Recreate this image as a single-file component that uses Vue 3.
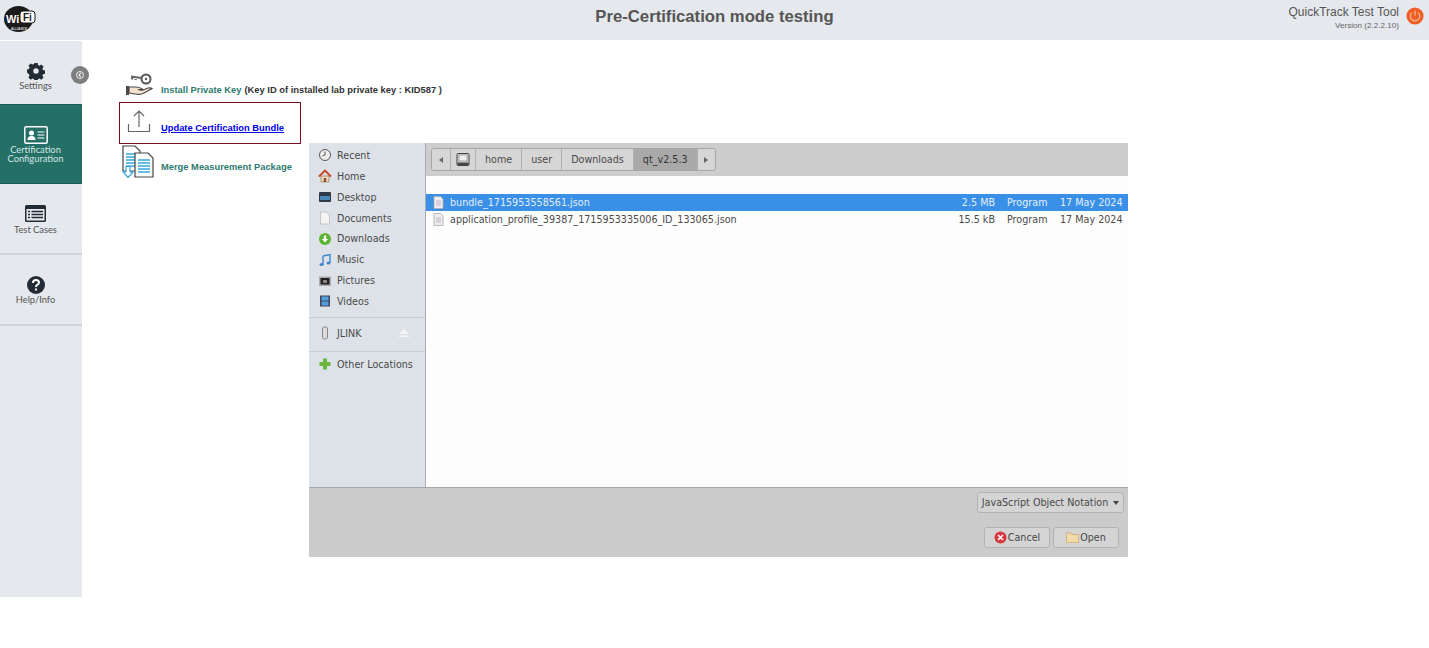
<script setup>
const places = [
  { name: 'Recent', icon: 'recent' },
  { name: 'Home', icon: 'home' },
  { name: 'Desktop', icon: 'desktop' },
  { name: 'Documents', icon: 'documents' },
  { name: 'Downloads', icon: 'downloads' },
  { name: 'Music', icon: 'music' },
  { name: 'Pictures', icon: 'pictures' },
  { name: 'Videos', icon: 'videos' },
]
const crumbs = ['home', 'user', 'Downloads']
const files = [
  { name: 'bundle_1715953558561.json', size: '2.5 MB', selected: true },
  { name: 'application_profile_39387_1715953335006_ID_133065.json', size: '15.5 kB', selected: false },
]
</script>

<template>
  <div class="page">
    <header class="topbar">
      <div class="logo">
        <svg width="36" height="34" viewBox="0 0 36 34">
          <ellipse cx="16.500" cy="16" rx="14.500" ry="13" fill="#1b1b1b" />
          <rect x="18" y="8" width="15" height="12" rx="3" fill="#fff" stroke="#1b1b1b" />
          <text x="4" y="20" class="logo-wi">Wi</text>
          <text x="21" y="18" class="logo-fi">Fi</text>
          <text x="9" y="26.500" class="logo-alliance">ALLIANCE</text>
        </svg>
      </div>
      <h1 class="title">Pre-Certification mode testing</h1>
      <div class="tool">
        <div class="tool-text">
          <div class="tool-name">QuickTrack Test Tool</div>
          <div class="tool-version">Version (2.2.2.10)</div>
        </div>
        <svg class="power" width="18" height="18" viewBox="0 0 20 20">
          <circle cx="10" cy="10" r="9.500" fill="#ee5f27" />
          <path d="M6.400 6.200 a5.300 5.300 0 1 0 7.200 0" fill="none" stroke="#f6c0a0" stroke-width="1.200" />
          <path d="M10 3.800 v6" stroke="#f6c0a0" stroke-width="1.200" />
        </svg>
      </div>
    </header>

    <div class="body">
      <nav class="sidebar">
        <a class="nav-item settings">
          <svg width="18" height="18" viewBox="0 0 20 20">
            <path fill="#232b35" fill-rule="evenodd" d="M8.2 1h3.600l.5 2.400 1.500.7 2.100-1.300 2.500 2.500-1.300 2.100.7 1.500 2.200.5v3.600l-2.200.5-.7 1.500 1.300 2.100-2.500 2.500-2.100-1.300-1.500.7-.5 2.200H8.200l-.5-2.200-1.500-.7-2.100 1.300-2.500-2.500 1.300-2.100-.7-1.500L0 11.800V8.200l2.200-.5.7-1.500L1.600 4.100l2.500-2.500 2.100 1.300 1.500-.7zM10 7a3 3 0 1 0 0 6 3 3 0 0 0 0-6z" />
          </svg>
          <span>Settings</span>
        </a>
        <a class="nav-item active cert">
          <svg width="24" height="18" viewBox="0 0 24 18">
            <rect x="0.800" y="0.800" width="22.400" height="16.400" rx="1.500" fill="none" stroke="#fff" stroke-width="1.500" />
            <circle cx="7.500" cy="7" r="2.500" fill="#fff" />
            <path d="M3.500 14 q0 -4 4 -4 q4 0 4 4 z" fill="#fff" />
            <path d="M13.500 6 h7 M13.500 9 h7 M13.500 12 h7" stroke="#fff" stroke-width="1.200" />
          </svg>
          <span>Certification<br />Configuration</span>
        </a>
        <a class="nav-item cases">
          <svg width="21" height="17" viewBox="0 0 21 17">
            <rect width="21" height="17" rx="1.500" fill="#232b35" />
            <rect x="1.500" y="4" width="18" height="11.500" fill="#e4e7ec" />
            <path d="M3 6.500h2M6.500 6.500h11.500M3 9.500h2M6.500 9.500h11.500M3 12.500h2M6.500 12.500h11.500" stroke="#232b35" stroke-width="1.300" />
          </svg>
          <span>Test Cases</span>
        </a>
        <a class="nav-item help">
          <svg width="18" height="18" viewBox="0 0 18 18">
            <circle cx="9" cy="9" r="9" fill="#232b35" />
            <path d="M6 7 q0 -3 3 -3 q3 0 3 2.500 q0 1.500 -1.500 2.200 q-1.500 .8 -1.500 2.300" fill="none" stroke="#fff" stroke-width="2" />
            <rect x="8" y="12.500" width="2" height="2" fill="#fff" />
          </svg>
          <span>Help/Info</span>
        </a>
        <button class="collapse">
          <svg width="8" height="8" viewBox="0 0 8 8">
            <circle cx="4" cy="4" r="3.500" fill="none" stroke="#eee" stroke-width="1" />
            <path d="M4.800 2 L3 4 L4.800 6" fill="none" stroke="#eee" stroke-width="1.200" />
          </svg>
        </button>
      </nav>

      <main class="content">
        <div class="actions">
          <a class="action install">
            <svg class="action-icon" width="27" height="23" viewBox="0 0 27 23">
              <circle cx="20" cy="6" r="4.500" fill="none" stroke="#555" stroke-width="2" />
              <circle cx="20" cy="6" r="1.200" fill="#555" />
              <path d="M15.500 5 L5 3.500 M6.500 3.500 l-.5 3 M10 4 l-.5 3" fill="none" stroke="#666" stroke-width="2.200" />
              <path d="M3 14 h7 q4 0 7 2.500 h-5 q3 1 5 .5 l5 -2 q3 -.5 4 .5 l-9 5 q-4 1.500 -8 .5 l-6 -1 z" fill="#f7e2d0" stroke="#4a4a4a" stroke-width="1.200" />
              <rect x="0" y="13" width="3" height="9" fill="#4a4a4a" />
            </svg>
            <span class="action-label">Install Private Key</span>
            <span class="key-note">(Key ID of installed lab private key : KID587 )</span>
          </a>
          <a class="action update">
            <svg class="action-icon" width="24" height="24" viewBox="0 0 24 24">
              <path d="M12 18 V2 M7 7 l5 -5 l5 5" fill="none" stroke="#666" stroke-width="1.200" />
              <path d="M1.500 15 v7.500 h21 V15" fill="none" stroke="#666" stroke-width="1.200" />
            </svg>
            <span class="update-label">Update Certification Bundle</span>
          </a>
          <a class="action merge">
            <svg class="action-icon" width="32" height="33" viewBox="0 0 32 33">
              <path d="M1 1 h12 l5 5 v20 H1 z" fill="#fff" stroke="#444" stroke-width="1.200" />
              <path d="M4 9 h11 M4 12 h11 M4 15 h11 M4 18 h11 M4 21 h11" stroke="#35a9dd" stroke-width="1.500" />
              <path d="M13 8 h13 l5 5 v19 H13 z" fill="#fff" stroke="#444" stroke-width="1.200" />
              <path d="M16 15 h12 M16 18 h12 M16 21 h12 M16 24 h12 M16 27 h12" stroke="#35a9dd" stroke-width="1.500" />
              <path d="M4 21.500 h4 v5.500 h3 l-5 5.500 l-5 -5.500 h3 z" fill="#fff" stroke="#35a9dd" stroke-width="1.200" />
            </svg>
            <span class="action-label">Merge Measurement Package</span>
          </a>
        </div>

        <section class="dialog">
          <div class="dialog-main">
            <aside class="places">
              <div v-for="p in places" :key="p.name" class="place">
                <svg class="place-icon" width="14" height="14" viewBox="0 0 14 14">
                  <template v-if="p.icon === 'recent'">
                    <circle cx="7" cy="7" r="5.500" fill="#eee" stroke="#555" />
                    <path d="M7 3.500 V7 L4.500 8" fill="none" stroke="#555" />
                  </template>
                  <template v-else-if="p.icon === 'home'">
                    <path d="M3 7 h8 v6 H3 z" fill="#f0d8bc" stroke="#8a6a4a" stroke-width=".6" />
                    <path d="M1 7.500 L7 1.500 L13 7.500" fill="none" stroke="#c4441c" stroke-width="1.800" />
                    <rect x="5.800" y="9" width="2.400" height="4" fill="#7a5230" />
                  </template>
                  <template v-else-if="p.icon === 'desktop'">
                    <rect x="1" y="2" width="12" height="10" rx="1" fill="#2f3b49" />
                    <rect x="2" y="6" width="10" height="4" fill="#4a86b8" />
                  </template>
                  <template v-else-if="p.icon === 'documents'">
                    <path d="M2.500 1 h6 l3 3 v9 h-9 z" fill="#f4f4f4" stroke="#bbb" stroke-width=".8" />
                  </template>
                  <template v-else-if="p.icon === 'downloads'">
                    <circle cx="7" cy="7" r="6" fill="#5cb531" />
                    <path d="M5.800 3.500 h2.400 v3.500 h2 L7 10.500 L3.800 7 h2 z" fill="#fff" />
                  </template>
                  <template v-else-if="p.icon === 'music'">
                    <path d="M5 3 L12 1.500 V10 M5 3 v9" fill="none" stroke="#3f86cf" stroke-width="1.400" />
                    <ellipse cx="3.500" cy="11.500" rx="2" ry="1.500" fill="#3f86cf" />
                    <ellipse cx="10.500" cy="10" rx="2" ry="1.500" fill="#3f86cf" />
                  </template>
                  <template v-else-if="p.icon === 'pictures'">
                    <rect x="1" y="2.500" width="12" height="9.500" fill="#aaa" />
                    <rect x="2.500" y="4" width="9" height="6.500" fill="#222" />
                    <rect x="5" y="6" width="4" height="3" fill="#888" />
                  </template>
                  <template v-else>
                    <rect x="2" y="1.500" width="10" height="11" fill="#445" />
                    <rect x="3.500" y="2.500" width="7" height="4" fill="#4fa0e0" />
                    <rect x="3.500" y="7.500" width="7" height="4" fill="#4fa0e0" />
                  </template>
                </svg>
                <span>{{ p.name }}</span>
              </div>
              <div class="place-sep"></div>
              <div class="place jlink">
                <svg class="place-icon" width="14" height="14" viewBox="0 0 14 14">
                  <rect x="4.500" y="1" width="5" height="12" rx="2" fill="#dcdcdc" stroke="#888" />
                </svg>
                <span>JLINK</span>
                <svg class="eject" width="10" height="9" viewBox="0 0 10 9">
                  <path d="M5 0 L10 5 H0 z M0 6.500 h10 V8 H0 z" fill="#f6f6f6" />
                </svg>
              </div>
              <div class="place-sep second"></div>
              <div class="place">
                <svg class="place-icon" width="14" height="14" viewBox="0 0 14 14">
                  <path d="M5 1.500 h4 v3.500 h3.500 v4 H9 v3.500 H5 V9 H1.500 V5 H5 z" fill="#6cb33f" />
                </svg>
                <span>Other Locations</span>
              </div>
            </aside>

            <div class="browser">
              <div class="pathbar">
                <div class="crumbs">
                  <button class="crumb arrow"><i class="tri left"></i></button>
                  <button class="crumb disk">
                    <svg width="14" height="13" viewBox="0 0 14 13">
                      <rect x="1" y="0.500" width="12" height="12" rx="1" fill="#d6d6d6" stroke="#444" />
                      <rect x="3" y="2" width="8" height="6" fill="#eee" stroke="#777" stroke-width=".6" />
                      <rect x="1.500" y="9.500" width="11" height="2.500" fill="#444" />
                    </svg>
                  </button>
                  <button v-for="c in crumbs" :key="c" class="crumb">{{ c }}</button>
                  <button class="crumb current">qt_v2.5.3</button>
                  <button class="crumb arrow"><i class="tri right"></i></button>
                </div>
              </div>
              <div class="files">
                <div v-for="f in files" :key="f.name" class="file" :class="{ selected: f.selected }">
                  <svg class="file-icon" width="11" height="13" viewBox="0 0 11 13">
                    <path d="M1 .5 h6.500 l2.500 2.500 v9.500 H1 z" fill="#eee" stroke="#aaa" stroke-width=".8" />
                    <path d="M3 5 h5 M3 7 h5 M3 9 h5" stroke="#b9a3c0" stroke-width=".8" />
                  </svg>
                  <span class="file-name">{{ f.name }}</span>
                  <span class="file-size">{{ f.size }}</span>
                  <span class="file-type">Program</span>
                  <span class="file-date">17 May 2024</span>
                </div>
              </div>
            </div>
          </div>

          <footer class="dialog-foot">
            <button class="btn combo">JavaScript Object Notation <i class="tri down"></i></button>
            <div class="foot-buttons">
              <button class="btn cancel">
                <svg width="13" height="13" viewBox="0 0 13 13">
                  <circle cx="6.500" cy="6.500" r="6" fill="#d9363e" />
                  <path d="M4 4 L9 9 M9 4 L4 9" stroke="#fff" stroke-width="1.600" />
                </svg>
                Cancel
              </button>
              <button class="btn open">
                <svg width="13" height="11" viewBox="0 0 13 11">
                  <path d="M.5 1 h4.500 l1 1.500 h6.500 v8 H.5 z" fill="#f2d9a8" stroke="#c9a66a" stroke-width=".7" />
                </svg>
                Open
              </button>
            </div>
          </footer>
        </section>
      </main>
    </div>
  </div>
</template>

<style scoped>
.page {
  width: 1429px;
  height: 648px;
  background: #fff;
  overflow: hidden;
  font-family: "Liberation Sans", Arial, sans-serif;
}

.topbar {
  height: 40px;
  background: #e5e8ec;
  display: grid;
  grid-template-columns: 1fr auto 1fr;
  align-items: start;
}
.logo {
  padding: 3px 0 0 2px;
}
.logo-wi {
  font: 900 11px "Liberation Sans", sans-serif;
  fill: #fff;
}
.logo-fi {
  font: 700 10px "Liberation Sans", sans-serif;
  fill: #1b1b1b;
}
.logo-alliance {
  font: 700 3.200px "Liberation Sans", sans-serif;
  fill: #ddd;
}
.title {
  margin: 0;
  padding-top: 7px;
  font-size: 16.700px;
  line-height: 20px;
  font-weight: 700;
  color: #555;
}
.tool {
  display: flex;
  justify-content: flex-end;
  align-items: flex-start;
  gap: 7px;
  padding: 5px 5px 0 0;
}
.power {
  margin-top: 2px;
}
.tool-text {
  text-align: right;
}
.tool-name {
  font-size: 12px;
  line-height: 15px;
  color: #555;
}
.tool-version {
  font-size: 8.100px;
  line-height: 11px;
  color: #666;
}

.body {
  display: flex;
  align-items: flex-start;
}

.sidebar {
  width: 82px;
  height: 557px;
  background: #e5e8ec;
  border-top: 1px solid #fff;
  box-sizing: border-box;
  position: relative;
  font-family: Lato, sans-serif;
}
.nav-item {
  display: flex;
  flex-direction: column;
  align-items: center;
  color: #555;
  font-size: 9.300px;
  box-sizing: border-box;
  border-bottom: 2px solid #cfd2d6;
  line-height: 9px;
  padding-right: 11px;
}
.settings {
  height: 63px;
  padding-top: 21px;
  gap: 1px;
  border-bottom: 0;
}
.cert {
  height: 80px;
  padding-top: 21px;
  gap: 1px;
}
.cases {
  height: 71px;
  padding-top: 21px;
  gap: 3px;
}
.help {
  height: 71px;
  padding-top: 21px;
  gap: 1px;
}
.active {
  background: #246f66;
  border-top: 1px solid #1d5c55;
  border-bottom: 1px solid #1d5c55;
  color: #d6e6e3;
  text-align: center;
}
.collapse {
  position: absolute;
  top: 25px;
  left: 71px;
  width: 18px;
  height: 18px;
  padding: 0;
  border: 0;
  border-radius: 50%;
  background: #7e7e7e;
  display: flex;
  align-items: center;
  justify-content: center;
}

.content {
  flex: 1;
  display: flex;
  padding: 30px 0 0 37px;
  align-items: flex-start;
}

.actions {
  width: 190px;
  flex: none;
  font-size: 9.350px;
  line-height: 11px;
  font-weight: 700;
}
.action {
  display: flex;
  align-items: flex-end;
  white-space: nowrap;
  box-sizing: border-box;
}
.action-icon {
  flex: none;
}
.action-label {
  color: #2f7a6f;
}
.install {
  height: 31px;
  padding: 0 0 5px 7px;
}
.install .action-icon {
  margin-right: 8px;
}
.key-note {
  color: #333;
  margin-left: 3px;
}
.update {
  width: 182px;
  height: 42px;
  margin-top: 1px;
  border: 1px solid #7a0f22;
  padding: 0 0 10px 7px;
}
.update .action-icon {
  margin-right: 10px;
}
.update-label {
  color: #0000ee;
  text-decoration: underline;
  margin-bottom: -1px;
}
.merge {
  height: 33px;
  margin-top: 1px;
  padding-left: 3px;
}
.merge .action-icon {
  margin-right: 7px;
}
.merge span {
  padding-bottom: 5px;
}

.dialog {
  width: 819px;
  height: 414px;
  margin-top: 73px;
  flex: none;
  display: flex;
  flex-direction: column;
  font-family: "DejaVu Sans", sans-serif;
  font-size: 9.600px;
  color: #4a4a4a;
}
.dialog-main {
  height: 345px;
  display: flex;
  border-bottom: 1px solid #a8a8a8;
  box-sizing: border-box;
}
.places {
  width: 117px;
  flex: none;
  background: #dde2e8;
  border-right: 1px solid #a9adb1;
  box-sizing: border-box;
  padding-top: 2px;
}
.place {
  height: 20.860px;
  display: flex;
  align-items: center;
  padding-left: 9px;
  gap: 5px;
}
.place-sep {
  height: 1px;
  background: #c8ccd1;
  margin: 5px 0 4px;
}
.place-sep.second {
  margin: 6px 0 2px;
}
.jlink {
  height: 23px;
}
.eject {
  margin-left: auto;
  margin-right: 16px;
}
.browser {
  flex: 1;
  display: flex;
  flex-direction: column;
  min-width: 0;
}
.pathbar {
  height: 33px;
  background: #cdcdcd;
  padding: 5px 0 0 5px;
  box-sizing: border-box;
}
.crumbs {
  display: inline-flex;
  height: 23px;
  border: 1px solid #a6a6a6;
  border-radius: 3px;
  box-sizing: border-box;
  overflow: hidden;
}
.crumb {
  border: 0;
  border-left: 1px solid #b0b0b0;
  background: #d6d6d6;
  color: #4a4a4a;
  font: inherit;
  padding: 0 9px;
  display: flex;
  align-items: center;
  justify-content: center;
}
.crumb:first-child {
  border-left: 0;
}
.crumb.arrow {
  width: 18px;
  padding: 0;
}
.crumb.disk {
  width: 25px;
  padding: 0;
}
.crumb.current {
  background: #a9a9a9;
  color: #333;
}
.tri {
  display: inline-block;
  width: 0;
  height: 0;
  border-style: solid;
  border-color: transparent;
}
.tri.left {
  border-width: 3.500px 4px 3.500px 0;
  border-right-color: #666;
}
.tri.right {
  border-width: 3.500px 0 3.500px 4px;
  border-left-color: #666;
}
.tri.down {
  border-width: 4px 3.500px 0;
  border-top-color: #444;
  margin-left: 2px;
  vertical-align: 1px;
}
.files {
  flex: 1;
  background: #fdfdfd;
  padding-top: 18px;
}
.file {
  height: 17px;
  display: flex;
  align-items: center;
  padding: 0 6px 0 7px;
  white-space: nowrap;
}
.file.selected {
  background: #3a8fe6;
  color: #e3effc;
}
.file-icon {
  margin-right: 6px;
}
.file-name {
  flex: 1;
}
.file-size {
  width: 60px;
  text-align: right;
}
.file-type {
  width: 53px;
  margin-left: 12px;
}
.file-date {
  width: 62px;
}

.dialog-foot {
  flex: 1;
  background: #cbcbcb;
  display: flex;
  flex-direction: column;
  align-items: flex-end;
  padding: 4px 4px 0 0;
  box-sizing: border-box;
}
.btn {
  font: inherit;
  color: #4a4a4a;
  background: #d4d4d4;
  border: 1px solid #b2b2b2;
  border-radius: 3px;
  display: flex;
  align-items: center;
  justify-content: center;
  white-space: nowrap;
  padding: 0;
}
.combo {
  width: 147px;
  height: 21px;
  gap: 3px;
}
.foot-buttons {
  display: flex;
  gap: 3px;
  margin-top: 14px;
  padding-right: 5px;
}
.cancel,
.open {
  width: 66px;
  height: 21px;
  gap: 1px;
}
</style>

<style>
html,
body {
  margin: 0;
  background: #fff;
}
</style>
